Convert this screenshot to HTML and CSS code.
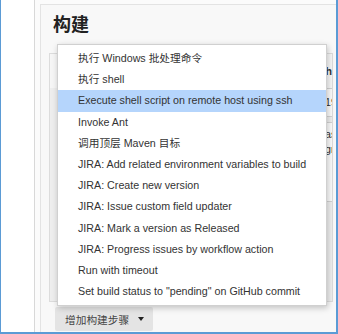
FILE: index.html
```html
<!DOCTYPE html>
<html lang="zh-CN">
<head>
  <meta charset="UTF-8">
  <title>构建</title>
  <link rel="stylesheet" href="styles.css">
</head>
<body>
  <div class="frame">
    <div class="side"></div>
    <div class="main">
      <div class="section">
        <h2>构建</h2>

        <div class="step">
          <div class="step-head">Execute shell script on remote host using ssh</div>
          <div class="step-row">
            <span class="label">SSH site</span>
            <div class="select">192.168.1.20:22</div>
          </div>
          <div class="step-row">
            <span class="label">Command</span>
            <div class="textarea">
              <div>ash /opt/deploy/run.sh</div>
              <div>grep -v error /var/log/app.log</div>
            </div>
          </div>
        </div>

        <button class="add-btn">增加构建步骤 <span class="caret"></span></button>
      </div>
    </div>

    <ul class="menu">
      <li>执行 Windows 批处理命令</li>
      <li>执行 shell</li>
      <li class="active">Execute shell script on remote host using ssh</li>
      <li>Invoke Ant</li>
      <li>调用顶层 Maven 目标</li>
      <li>JIRA: Add related environment variables to build</li>
      <li>JIRA: Create new version</li>
      <li>JIRA: Issue custom field updater</li>
      <li>JIRA: Mark a version as Released</li>
      <li>JIRA: Progress issues by workflow action</li>
      <li>Run with timeout</li>
      <li>Set build status to "pending" on GitHub commit</li>
    </ul>
  </div>
</body>
</html>
```

FILE: styles.css
```css
body {
  margin: 0;
  font-family: "Liberation Sans", Arial, "Noto Sans CJK SC", sans-serif;
  color: #333;
}
.frame {
  position: relative;
  width: 338px;
  height: 334px;
  box-sizing: border-box;
  border-left: 1px solid #5b9bd5;
  border-right: 2px solid #5b9bd5;
  border-bottom: 2px solid #5b9bd5;
  display: flex;
  overflow: hidden;
  background: #fff;
}
.side {
  flex: none;
  width: 33px;
  border-right: 1px solid #d8d8d8;
  background: #fff;
}
.main {
  flex: 1;
  min-width: 0;
  padding: 4px 0 0 5px;
  background: #fbfbfb;
}
.section {
  height: 100%;
  box-sizing: border-box;
  border-left: 1px solid #e3e3e3;
  border-top: 1px solid #e3e3e3;
  background: #f8f8f8;
  padding: 6px 3px 0 8px;
}
h2 {
  margin: 0 0 18px 4px;
  font-size: 18px;
  line-height: 24px;
  font-weight: bold;
  color: #222;
  font-family: "Noto Sans CJK SC", sans-serif;
}
.step {
  height: 249px;
  box-sizing: border-box;
  border: 1px solid #dcdcdc;
  background: #eeeeee;
  overflow: hidden;
  font-size: 10.7px;
}
.step-head {
  height: 34px;
  line-height: 34px;
  text-align: right;
  font-weight: bold;
  white-space: nowrap;
  overflow: hidden;
  background: #f6f6f6;
}
.step-row {
  display: flex;
  white-space: nowrap;
  margin-bottom: 5px;
}
.label {
  width: 271px;
  flex: none;
  padding: 8px 0 0 10px;
  box-sizing: border-box;
}
.select {
  flex: none;
  width: 120px;
  height: 29px;
  box-sizing: border-box;
  border: 1px solid #d2d2d2;
  background: #fafafa;
  line-height: 27px;
  padding-left: 3px;
}
.textarea {
  flex: none;
  width: 200px;
  height: 80px;
  box-sizing: border-box;
  border: 1px solid #d2d2d2;
  background: #fafafa;
  padding: 4px 0 0 3px;
  line-height: 15px;
}
.add-btn {
  display: flex;
  align-items: center;
  gap: 9px;
  margin: 5px 0 0 6px;
  height: 24px;
  padding: 0 9px 0 10px;
  border: none;
  border-radius: 2px;
  background: #e4e4e4;
  color: #444;
  font-family: "Noto Sans CJK SC", sans-serif;
  font-size: 10.7px;
}
.caret {
  width: 0;
  height: 0;
  border-left: 3.5px solid transparent;
  border-right: 3.5px solid transparent;
  border-top: 4px solid #222;
}
.menu {
  position: absolute;
  left: 56px;
  top: 44px;
  width: 270px;
  box-sizing: border-box;
  margin: 0;
  padding: 3px 0;
  list-style: none;
  background: #fff;
  border: 1px solid #d0d0d0;
  box-shadow: 1px 2px 6px rgba(0, 0, 0, 0.22);
  font-size: 10.7px;
  color: #333;
}
.menu li {
  line-height: 21.2px;
  padding: 0 20px;
  white-space: nowrap;
}
.menu .active {
  background: #b5d5fc;
}
```
